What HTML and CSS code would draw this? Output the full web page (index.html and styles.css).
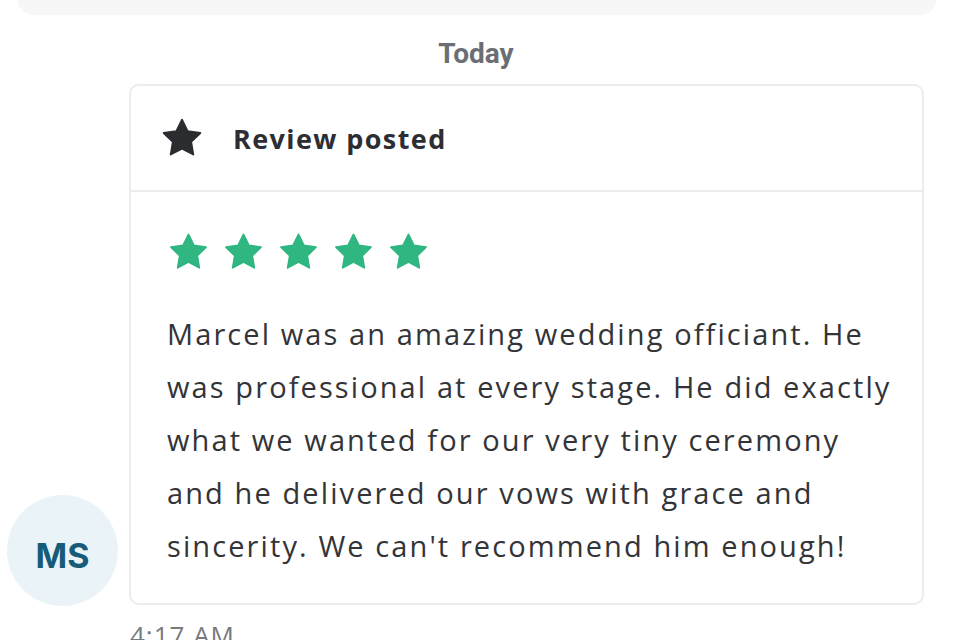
FILE: index.html
```html
<!DOCTYPE html>
<html lang="en">

<head>
  <meta charset="UTF-8">
  <meta name="viewport" content="width=device-width, initial-scale=1.0">
  <title>Review posted</title>
  <link rel="stylesheet" href="styles.css">
</head>

<body>
  <div class="top-bar"></div>

  <div class="day">Today</div>

  <div class="message">
    <div class="avatar">MS</div>

    <div class="card">
      <div class="card-head">
        <svg class="head-star" viewBox="0 0 24 24">
          <path d="M12 2l3.09 6.26L22 9.27l-5 4.87 1.18 6.88L12 17.77l-6.18 3.25L7 14.14 2 9.27l6.91-1.01L12 2z" />
        </svg>
        <span class="head-title">Review posted</span>
      </div>

      <div class="card-body">
        <div class="rating">
          <svg class="star" viewBox="0 0 24 24"><path d="M12 2l3.09 6.26L22 9.27l-5 4.87 1.18 6.88L12 17.77l-6.18 3.25L7 14.14 2 9.27l6.91-1.01L12 2z" /></svg>
          <svg class="star" viewBox="0 0 24 24"><path d="M12 2l3.09 6.26L22 9.27l-5 4.87 1.18 6.88L12 17.77l-6.18 3.25L7 14.14 2 9.27l6.91-1.01L12 2z" /></svg>
          <svg class="star" viewBox="0 0 24 24"><path d="M12 2l3.09 6.26L22 9.27l-5 4.87 1.18 6.88L12 17.77l-6.18 3.25L7 14.14 2 9.27l6.91-1.01L12 2z" /></svg>
          <svg class="star" viewBox="0 0 24 24"><path d="M12 2l3.09 6.26L22 9.27l-5 4.87 1.18 6.88L12 17.77l-6.18 3.25L7 14.14 2 9.27l6.91-1.01L12 2z" /></svg>
          <svg class="star" viewBox="0 0 24 24"><path d="M12 2l3.09 6.26L22 9.27l-5 4.87 1.18 6.88L12 17.77l-6.18 3.25L7 14.14 2 9.27l6.91-1.01L12 2z" /></svg>
        </div>
        <p class="review-text">
          Marcel was an amazing wedding officiant. He<br>
          was professional at every stage. He did exactly<br>
          what we wanted for our very tiny ceremony<br>
          and he delivered our vows with grace and<br>
          sincerity. We can't recommend him enough!
        </p>
      </div>
    </div>
  </div>

  <div class="time">4:17 AM</div>
</body>

</html>
```

FILE: styles.css
```css
body {
  margin: 0;
  background: #fff;
  font-family: "Open Sans", "Noto Sans", sans-serif;
  color: #333438;
  overflow: hidden;
}

/* leftover of the previous message */
.top-bar {
  height: 15px;
  margin: 0 24px 0 18px;
  background: #f7f7f7;
  border-radius: 0 0 16px 16px;
}

.day {
  margin-top: 22px;
  padding-right: 8px;
  text-align: center;
  font-family: Roboto, sans-serif;
  font-weight: 700;
  font-size: 28px;
  line-height: 34px;
  color: #6b6e75;
}

.message {
  display: flex;
  align-items: flex-end;
  gap: 11px;
  margin-top: 13px;
  padding-left: 7px;
}

.avatar {
  flex: 0 0 111px;
  height: 111px;
  box-sizing: border-box;
  padding-top: 9px;
  margin-bottom: -1px;
  border-radius: 50%;
  background: #eaf4f8;
  display: flex;
  align-items: center;
  justify-content: center;
  font-family: Inter, "Noto Sans", sans-serif;
  font-weight: 700;
  font-size: 34px;
  color: #165b78;
}

.card {
  width: 791px;
  border: 2px solid #ececec;
  border-radius: 10px;
}

.card-head {
  height: 104px;
  display: flex;
  align-items: center;
  gap: 29px;
  padding-left: 29px;
  border-bottom: 2px solid #ececec;
}

.head-star {
  width: 44px;
  height: 44px;
}

.head-star path {
  fill: #2b2c30;
  stroke: #2b2c30;
  stroke-width: 1;
  stroke-linejoin: round;
}

.head-title {
  font-weight: 700;
  font-size: 27px;
  letter-spacing: 1.4px;
  color: #2d2e33;
}

.card-body {
  padding: 39px 30px 31px 36px;
}

.rating {
  display: flex;
  gap: 12px;
}

.star {
  width: 43px;
  height: 42px;
}

.star path {
  fill: #2fb681;
  stroke: #2fb681;
  stroke-width: 1;
  stroke-linejoin: round;
}

.review-text {
  margin: 34px 0 0;
  font-size: 29px;
  line-height: 53px;
  letter-spacing: 2.1px;
  color: #333438;
}

.time {
  margin: 12px 0 0 130px;
  font-size: 26px;
  letter-spacing: 1px;
  color: #777a80;
}
```
